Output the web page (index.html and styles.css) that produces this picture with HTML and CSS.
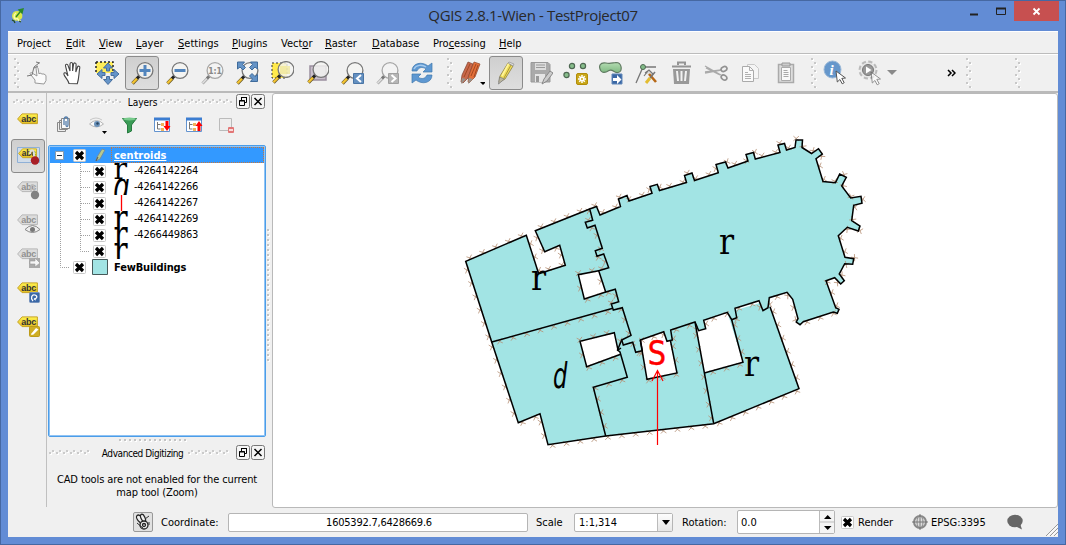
FILE: index.html
```html
<!DOCTYPE html>
<html lang="en">
<head>
<meta charset="utf-8">
<title>QGIS 2.8.1-Wien - TestProject07</title>
<link rel="stylesheet" href="styles.css">
</head>
<body>
<svg class="defs" width="0" height="0">
  <defs>
    <pattern id="gripV" width="7" height="8" patternUnits="userSpaceOnUse"><path d="M1 1h2v2h-2zM4 5h2v2h-2z" fill="#fff"/><path d="M0 0h2v2h-2zM3 4h2v2h-2z" fill="#c8c8c8"/></pattern>
    <pattern id="gripH" width="7" height="6" patternUnits="userSpaceOnUse"><path d="M1 3h2v2h-2zM4 1h2v2h-2z" fill="#fff"/><path d="M0 2h2v2h-2zM3 0h2v2h-2z" fill="#cbcbcb"/></pattern>
    <pattern id="gripLineV" width="3" height="5" patternUnits="userSpaceOnUse"><path d="M1 1h2v2h-2z" fill="#fff"/><path d="M0 0h2v2h-2z" fill="#c4c4c4"/></pattern>
    <pattern id="gripLineH" width="5" height="3" patternUnits="userSpaceOnUse"><path d="M1 1h2v2h-2z" fill="#fff"/><path d="M0 0h2v2h-2z" fill="#c4c4c4"/></pattern>
    <linearGradient id="yellowTag" x2="0" y2="1"><stop offset="0" stop-color="#fff34f"/><stop offset="1" stop-color="#e3bd22"/></linearGradient>
    <linearGradient id="greenFill" x2="0" y2="1"><stop offset="0" stop-color="#b4dcb2"/><stop offset="1" stop-color="#7fb982"/></linearGradient>
    <symbol id="lens" viewBox="0 0 24 24">
      <path d="M2.5 22.5l5-5.2" stroke="#6b5b2a" stroke-width="3.4"/><path d="M2.5 22.2l4.6-4.8" stroke="#f4c430" stroke-width="2.2"/>
      <path d="M7 17.5l2.5-2.6" stroke="#222" stroke-width="3"/>
      <circle cx="15" cy="9.5" r="7.9" fill="#f4f4f1" fill-opacity=".82" stroke="#777" stroke-width="1.3"/>
    </symbol>
    <symbol id="lensOff" viewBox="0 0 24 24">
      <path d="M2.5 22.5l5-5.2" stroke="#aaa" stroke-width="3"/><path d="M2.5 22.2l4.6-4.8" stroke="#e0e0e0" stroke-width="1.4"/>
      <path d="M7 17.5l2.5-2.6" stroke="#777" stroke-width="3"/>
      <circle cx="15" cy="9.5" r="7.9" fill="#f3f3f3" stroke="#a6a6a6" stroke-width="1.3"/>
    </symbol>
    <symbol id="tag" viewBox="0 0 22 12"><path d="M.6 6L5 .9H20.4V10.6H5z" fill="url(#yellowTag)" stroke="#c7a424"/><text x="4.2" y="8.7" class="abc">abc</text></symbol>
    <symbol id="tagOff" viewBox="0 0 22 12"><path d="M.6 6L5 .9H20.4V10.6H5z" fill="#ddd" stroke="#b7b7b7"/><text x="4.2" y="8.7" class="abc off">abc</text></symbol>
    <symbol id="cross" viewBox="0 0 13 13"><rect x=".5" y=".5" width="12" height="12" rx="1" fill="#fff" stroke="#c8c8c8"/><path d="M3 3l7 7M10 3l-7 7" stroke="#000" stroke-width="3.200"/></symbol>
    <symbol id="float" viewBox="0 0 14 15"><rect x=".5" y=".5" width="13" height="14" rx="2" fill="#f5f5f5" stroke="#777"/><path d="M5.500 6V3.500h5v5h-2M5 3.500h6M3.500 6.500h5v5h-5zM3 7h6" fill="none" stroke="#000"/></symbol>
    <symbol id="close" viewBox="0 0 14 15"><rect x=".5" y=".5" width="13" height="14" rx="2" fill="#f5f5f5" stroke="#777"/><path d="M3.500 4l7 7M10.500 4l-7 7" stroke="#000" stroke-width="1.500"/></symbol>
    <symbol id="cursor" viewBox="0 0 12 15"><path d="M1 1l9.500 7-3.700.4 2.400 4.300-2 1.100-2.300-4.300-2.600 2.500z" fill="#fff" stroke="#555"/></symbol>
  </defs>
</svg>

<div class="window">
  <header class="titlebar">
    <svg class="logo" width="14" height="16" viewBox="0 0 14 16"><path d="M6 3C1 3 0 8 2 11c2 3 7 2 9-1 1-3 0-7-5-7z" fill="#d9e84a"/><path d="M5 5c-3 2-2 6 0 6M5 11c3-2 1 3 5 2" fill="none" stroke="#f8fbb0" stroke-width="1.500"/><path d="M5 9l4-5M8 2l4-1-1 4z" stroke="#2b8a28" fill="#2b8a28" stroke-width="1.400"/><path d="M1 12l2 1 1 2M8 13l2 1" fill="none" stroke="#264d22" stroke-width="1.300"/></svg>
    <h1 class="title">QGIS 2.8.1-Wien - TestProject07</h1>
    <svg class="controls" width="89" height="20" viewBox="0 0 89 20"><path d="M0 13.500h8" stroke="#222" stroke-width="2"/><path d="M26.500 7.500h9v6h-9z" fill="none" stroke="#222"/><path d="M26 7.500h10" stroke="#222" stroke-width="2"/><path d="M44 0h45v20h-45z" fill="#c75050"/><path d="M63.500 7.500l6 6M69.500 7.500l-6 6" stroke="#fff" stroke-width="1.800"/></svg>
  </header>

  <main class="client">
    <nav class="menubar">
      <span class="m1">Pro<u>j</u>ect</span><span class="m2"><u>E</u>dit</span><span class="m3"><u>V</u>iew</span><span class="m4"><u>L</u>ayer</span><span class="m5"><u>S</u>ettings</span><span class="m6"><u>P</u>lugins</span><span class="m7">Vect<u>o</u>r</span><span class="m8"><u>R</u>aster</span><span class="m9"><u>D</u>atabase</span><span class="m10">Pro<u>c</u>essing</span><span><u>H</u>elp</span>
    </nav>

    <div class="toolbar">
      <svg class="grip first" width="12" height="30" viewBox="1 0 12 30"><rect x="7" width="6" height="30" fill="url(#gripV)"/></svg>
      <div class="tool"><svg width="24" height="24" viewBox="0 0 24 24"><path d="M9 22v-3L5 14c-2-2 0-3 1-2l5 3-1-8c0-1 1.500-1 2 0l1 6 1-1 2 1 2 0 2 1.500v5l-2 3.500z" fill="#fafafa" stroke="#999" transform="translate(1)"/><path d="M2 15l5-1 2-8 5-4M11 1l4 1M9 7l4-2" stroke="#777" fill="none"/></svg></div>
      <div class="tool"><svg width="24" height="24" viewBox="0 0 24 24"><path d="M9 22.500c-1-4-4-6-5-9-.5-2 1.500-2.200 2.500-.8L8 15 5.500 5c-.4-2 2-2.400 2.500-.6L10 10V3c.2-2 2.500-2 2.600 0v7l1-7c.4-1.700 2.600-1.300 2.500.4L15.800 11l1.700-5c.6-1.500 2.600-.9 2.300.7-1 5-.6 10-2.500 16z" fill="#fff" stroke="#444" stroke-width="1.100"/></svg></div>
      <div class="tool"><svg width="26" height="26" viewBox="0 0 26 26"><path d="M2 2h17v11h-17z" fill="#ffed59"/><path d="M2 2h17v10M2 2v12" fill="none" stroke="#222" stroke-width="1.500" stroke-dasharray="2 2"/><path d="M14 3l4.500 5h-3v3h-3v-3h-3zM14 24.500l4.500-5h-3v-3h-3v3h-3zM3 14l5-4.500v3h3v3H8v3zM25 14l-5-4.500v3h-3v3h3v3z" fill="#6594c8" stroke="#476f9e"/></svg></div>
      <div class="tool pressed"><svg width="24" height="24" viewBox="0 0 24 24"><use href="#lens"/><path d="M15 4v11M9.500 9.500h11" stroke="#5285bd" stroke-width="3"/></svg></div>
      <div class="tool"><svg width="24" height="24" viewBox="0 0 24 24"><use href="#lens"/><path d="M9.500 9.500h11" stroke="#5285bd" stroke-width="3"/></svg></div>
      <div class="tool"><svg width="24" height="24" viewBox="0 0 24 24"><use href="#lensOff"/><text x="8.200" y="13" class="one">1:1</text></svg></div>
      <div class="tool"><svg width="24" height="24" viewBox="0 0 24 24"><use href="#lens"/><path d="M2.500 1h7L7.500 3.500l3 3-2.500 2.500-3-3-2.500 2zM22.500 1h-7l2 2.500-3 3 2.500 2.500 3-3 2.500 2zM22.500 20.500h-7l2-2.500-3-3 2.500-2.500 3 3 2.500-2z" fill="#6493c6" stroke="#3f6b9b"/></svg></div>
      <div class="tool"><svg width="24" height="24" viewBox="0 0 24 24"><path d="M2 2h15v15H2z" fill="#ffe94c" stroke="#333" stroke-dasharray="2 2"/><use href="#lens" x="1" y="-1"/><path d="M10 5h10v8H10z" fill="#efe37e" opacity=".55"/></svg></div>
      <div class="tool"><svg width="24" height="24" viewBox="0 0 24 24"><path d="M5 5h16v14H5z" fill="#c9bfcb" stroke="#9a8f9f" stroke-width="1.500"/><use href="#lens" x="1" y="-1"/></svg></div>
      <div class="tool"><svg width="24" height="24" viewBox="0 0 24 24"><use href="#lens"/><path d="M13.500 12.500h10v10h-10z" fill="#6490c0" stroke="#4a75a5"/><path d="M21 14l-4 3.500 4 3.500" fill="none" stroke="#fff" stroke-width="2"/></svg></div>
      <div class="tool"><svg width="24" height="24" viewBox="0 0 24 24"><use href="#lensOff"/><path d="M13.500 12.500h10v10h-10z" fill="#b5b5b5" stroke="#a0a0a0"/><path d="M16.500 14l4 3.500-4 3.500" fill="none" stroke="#fff" stroke-width="2"/></svg></div>
      <div class="tool"><svg width="24" height="24" viewBox="0 0 24 24"><path d="M2 10c0-8 10-10 16-5l4-3v9h-9l3-3c-4-3-8-1-9 2zM22 14c0 8-10 10-16 5l-4 3v-9h9l-3 3c4 3 8 1 9-2z" fill="#5e98d2" stroke="#4178ae" stroke-width=".7"/><path d="M4 8c2-4 8-5 12-2" fill="none" stroke="#a7cbed" stroke-width="1.500"/></svg></div>
      <svg class="grip" width="14" height="30"><rect x="7" width="6" height="30" fill="url(#gripV)"/></svg>
      <div class="tool"><svg width="28" height="26" viewBox="0 0 28 26"><path d="M4 22l1-7L11 2l5 2-5 14-5 5z" fill="#c8684b" stroke="#7c402e" stroke-width=".7"/><path d="M11 22l1-7L17 2l6 2-5 13-6 6z" fill="#e46f39" stroke="#8e4529" stroke-width=".7"/><path d="M14 16l5-12M7 17l6-13M17 17l4-12" stroke="#a34822"/><path d="M5 18l4 1-5 5zM12 18l4 1-5 5z" fill="#9a938b"/><path d="M23 22h6l-3 3z" fill="#000"/></svg></div>
      <div class="tool pressed"><svg width="24" height="24" viewBox="0 0 24 24"><path d="M5 21l1-6L14 2l5 3-8 13z" fill="#f1df5a" stroke="#8b7f41" stroke-width=".8"/><path d="M8 15l7-13" stroke="#fff59d" stroke-width="1.600"/><path d="M10 17l7-13" stroke="#a9963c"/><path d="M4.500 23l1-7 5 2z" fill="#bbb69f" stroke="#777" stroke-width=".7"/><path d="M14 2l5 3 1-2-5-2z" fill="#ddd" stroke="#888" stroke-width=".6"/></svg></div>
      <div class="tool"><svg width="24" height="24" viewBox="0 0 24 24"><path d="M2 1.500h17l2 2V21H2z" fill="#aaa" stroke="#999"/><path d="M6 2h11v7H6z" fill="#ddd"/><path d="M7 4h9M7 6.500h9" stroke="#999"/><path d="M6 13h10v8H6z" fill="#e5e5e5"/><path d="M7 15h3v6H7z" fill="#999"/><path d="M13 23l2-5 6-8 3 2-6 8z" fill="#ccc" stroke="#888"/></svg></div>
      <div class="tool"><svg width="26" height="26" viewBox="0 0 26 26"><g fill="#87bd8b" stroke="#4e6852" stroke-width="1.200"><circle cx="9" cy="6" r="2.600"/><circle cx="20" cy="6" r="2.600"/><circle cx="3.500" cy="15" r="2.600"/></g><rect x="13.500" y="13.500" width="11" height="11" rx="1.500" fill="#c9a719" stroke="#b28d09"/><path d="M19 15v8M15 19h8M16.200 16.200l5.600 5.600M21.800 16.200l-5.600 5.600" stroke="#fff" stroke-width="1.500"/><circle cx="19" cy="19" r="1" fill="#c9a719"/></svg></div>
      <div class="tool"><svg width="26" height="26" viewBox="0 0 26 26"><path d="M3 11c-3-5-1-9 5-8 4 1 6 0 10-.5 6 0 7 9 2 10-4 1-5-4-9-2-3 2-6 3-8 .5z" fill="url(#greenFill)" stroke="#607a61" stroke-width="1.200"/><path d="M14 14h10v10H14z" fill="#3a67a4" stroke="#6389ba"/><path d="M15 18h4v-3l4.500 4.500L19 24v-3h-4z" fill="#fff"/></svg></div>
      <div class="tool"><svg width="24" height="24" viewBox="0 0 24 24"><path d="M2 22L9 6h13" fill="none" stroke="#777" stroke-width="1.300"/><circle cx="9" cy="6" r="2.500" fill="#81ba87" stroke="#4e6852"/><path d="M11 12l4-3 4 4-2 2M14 10l-4 5" fill="#ddd" stroke="#777" stroke-width="1.200"/><path d="M15 13l7 8" stroke="#b76816" stroke-width="2.600"/><path d="M12 22l4-5" stroke="#e3bd31" stroke-width="3"/><path d="M16 17l5-6" stroke="#777" stroke-width="1.500"/></svg></div>
      <div class="tool"><svg width="24" height="24" viewBox="0 0 24 24"><path d="M4 8h17l-1 15H5z" fill="#999"/><path d="M3 5.500h19M9 4V1.500h7V4" fill="none" stroke="#949494" stroke-width="2"/><path d="M8 10l1 10M12.500 10v10M17 10l-1 10" stroke="#f2f2f2" stroke-width="2"/></svg></div>
      <div class="tool"><svg width="24" height="24" viewBox="0 0 24 24"><path d="M1 5l16 9M1 12l16-3M2 7l14 7M1 11l16-2" stroke="#aaa" stroke-width="1.300"/><ellipse cx="20" cy="8" rx="3" ry="2.300" fill="none" stroke="#929292" stroke-width="1.700" transform="rotate(-25 20 8)"/><ellipse cx="20" cy="16.500" rx="3" ry="2.300" fill="none" stroke="#929292" stroke-width="1.700" transform="rotate(35 20 16.500)"/></svg></div>
      <div class="tool"><svg width="24" height="24" viewBox="0 0 24 24"><path d="M8.500 3.500h7l4 4v10h-11z" fill="#f5f5f5" stroke="#c9c9c9"/><path d="M3.500 5.500h7l4 4v11h-11z" fill="#fafafa" stroke="#aaa"/><path d="M10.500 5.500v4h4M6 11.500h3M6 13.500h6M6 15.500h6M6 17.500h6" fill="none" stroke="#b0b0b0"/></svg></div>
      <div class="tool"><svg width="24" height="24" viewBox="0 0 24 24"><path d="M4.500 3.500h15v18h-15z" fill="#ddd" stroke="#aaa" stroke-width="1.500"/><path d="M7.500 6.500h9v13h-9z" fill="#fafafa" stroke="#aaa"/><path d="M8 2h8v3H8z" fill="#ccc" stroke="#999"/><path d="M9.500 9.500h4M9.500 11.500h5M9.500 13.500h5M9.500 15.500h5" stroke="#aaa"/></svg></div>
      <svg class="grip" width="14" height="30"><rect x="7" width="6" height="30" fill="url(#gripV)"/></svg>
      <div class="tool"><svg width="25" height="26" viewBox="0 0 25 26"><circle cx="10.500" cy="9.500" r="8.500" fill="#6697cb" stroke="#9ab8d7"/><text x="7.500" y="14.500" class="info">i</text><use href="#cursor" x="13" y="10" width="12" height="15"/></svg></div>
      <div class="tool"><svg width="25" height="26" viewBox="0 0 25 26"><circle cx="11" cy="10" r="8" fill="#e6e6e6" stroke="#bababa" stroke-width="3" stroke-dasharray="4 2.280"/><circle cx="11" cy="10" r="7.600" fill="#e6e6e6"/><circle cx="11" cy="10" r="5.500" fill="#999" stroke="#777"/><path d="M9 6.500l5.500 3.500-5.500 3.500z" fill="#fff"/><use href="#cursor" x="13" y="11" width="12" height="15" opacity=".6"/></svg></div>
      <svg class="drop" width="10" height="6"><path d="M0 0h10L5 5z" fill="#8a8a8a"/></svg>
      <svg class="more" width="9" height="8"><path d="M1 1l3 3-3 3M5 1l3 3-3 3" fill="none" stroke="#000" stroke-width="1.500"/></svg>
      <svg class="grip g3" width="6" height="30"><rect width="6" height="30" fill="url(#gripV)"/></svg>
      <svg class="grip g4" width="6" height="30"><rect width="6" height="30" fill="url(#gripV)"/></svg>
    </div>

    <div class="workspace">
      <aside class="labelbar">
        <svg width="31" height="6"><rect width="31" height="6" fill="url(#gripH)"/></svg>
        <div class="ltool"><svg width="26" height="24" viewBox="0 0 26 24"><use href="#tag" x="2" y="6" width="22" height="12"/></svg></div>
        <div class="ltool pressed tall"><svg width="26" height="24" viewBox="0 0 26 24"><path d="M2.500 3.500h22v15h-22z" fill="#d1dce8" stroke="#8fb0d6"/><use href="#tag" x="3" y="4" width="20" height="11"/><path d="M15 10c0-5 4-5 4 0v3" fill="none" stroke="#ddd" stroke-width="2"/><circle cx="20" cy="16.500" r="4.200" fill="#a81f26"/></svg></div>
        <div class="ltool"><svg width="26" height="24" viewBox="0 0 26 24"><use href="#tagOff" x="2" y="3" width="22" height="12"/><path d="M16 13V9c0-3 3-3 3 0v4" fill="none" stroke="#bbb" stroke-width="1.500"/><circle cx="20" cy="17" r="4.200" fill="#818181"/></svg></div>
        <div class="ltool"><svg width="26" height="24" viewBox="0 0 26 24"><use href="#tagOff" x="2" y="2" width="22" height="12"/><path d="M10 17.500q7.500-8 15 0q-7.500 6-15 0z" fill="#eee" stroke="#888"/><circle cx="17.500" cy="17.500" r="2.500" fill="#777"/></svg></div>
        <div class="ltool"><svg width="26" height="24" viewBox="0 0 26 24"><use href="#tagOff" x="2" y="2" width="22" height="12"/><path d="M14 12h11v10H14z" fill="#aaa"/><path d="M15 15h5v-3l5 5-5 4v-3h-5z" fill="#f5f5f5" stroke="#999" stroke-width=".6"/></svg></div>
        <div class="ltool"><svg width="26" height="24" viewBox="0 0 26 24"><use href="#tag" x="2" y="2" width="22" height="12"/><rect x="14.500" y="12.500" width="10" height="10" rx="1" fill="#3b68a7" stroke="#7592bd"/><path d="M18 21c-3-3-1-7 2-6s2 4-1 4l2 1" fill="none" stroke="#fff" stroke-width="1.300"/></svg></div>
        <div class="ltool"><svg width="26" height="24" viewBox="0 0 26 24"><use href="#tag" x="2" y="2" width="22" height="12"/><rect x="14.500" y="12.500" width="10" height="10" rx="1" fill="#cfae24" stroke="#bd9b18"/><path d="M16 20l5-6 2.500 1.500-5 5-2 .5z" fill="#fff"/></svg></div>
      </aside>

      <section class="docks">
        <div class="docktitle"><svg width="72" height="6"><rect width="72" height="6" fill="url(#gripH)"/></svg><h2 class="dockname">Layers</h2><svg width="72" height="6"><rect width="72" height="6" fill="url(#gripH)"/></svg><div class="dockbtns"><svg width="14" height="15"><use href="#float"/></svg><svg width="14" height="15"><use href="#close"/></svg></div></div>
        <div class="layertools">
          <svg width="20" height="20" viewBox="0 0 20 20"><path d="M2.500 7.500h8v9h-8zM4.500 5.500h8v9h-8z" fill="#eee" stroke="#888"/><path d="M6.500 3.500h8v10h-8z" fill="#fafafa" stroke="#888"/><path d="M9 10V5c0-4 4-4 4 0v5c0 2-2 2-2 0V6" fill="none" stroke="#557eab" stroke-width="1.300"/></svg>
          <svg width="20" height="20" viewBox="0 0 20 20"><path d="M2.500 9q7-7 14 0q-7 6-14 0z" fill="#fafafa" stroke="#b7b7b7"/><circle cx="10" cy="9" r="3" fill="#6a91b9"/><circle cx="10.500" cy="8.500" r="1.200" fill="#29435c"/><path d="M3 5q6-4 12 0" fill="none" stroke="#c8c8c8"/><path d="M15 16h5l-2.500 3z" fill="#000"/></svg>
          <svg width="20" height="20" viewBox="0 0 20 20"><path d="M3.500 3.500h14l-5 6.500v6l-4 2v-8z" fill="#3a9b56" stroke="#277b40"/><ellipse cx="10.500" cy="4" rx="6.500" ry="1.500" fill="#77ca8b"/></svg>
          <svg width="20" height="20" viewBox="0 0 20 20"><path d="M2.500 3.500h15v13h-15z" fill="#fff" stroke="#6393cf"/><path d="M2 4h16" stroke="#3c7dd1" stroke-width="3"/><path d="M5.500 7v7h3M5.500 9.500h3" fill="none" stroke="#777"/><path d="M9 8h3v3H9zM9 13h3v3H9z" fill="#efb35c"/><path d="M13.500 6h3v5h2l-3.500 5-3.500-5h2z" fill="#f00"/></svg>
          <svg width="20" height="20" viewBox="0 0 20 20"><path d="M2.500 3.500h15v13h-15z" fill="#fff" stroke="#6393cf"/><path d="M2 4h16" stroke="#3c7dd1" stroke-width="3"/><path d="M5.500 7v7h3M5.500 9.500h3" fill="none" stroke="#777"/><path d="M9 8h3v3H9zM9 13h3v3H9z" fill="#efb35c"/><path d="M13.500 16h3v-5h2l-3.500-5-3.500 5h2z" fill="#f00"/></svg>
          <svg width="20" height="20" viewBox="0 0 20 20"><path d="M3.500 3.500h12v12h-12z" fill="#eee" stroke="#bbb"/><rect x="12" y="12" width="6" height="6" rx="1" fill="#e27676"/><path d="M13 15h4" stroke="#fff" stroke-width="1.500"/></svg>
        </div>
        <div class="tree">
          <svg class="branches" width="60" height="128" viewBox="0 0 60 128"><path d="M10.500 14V120.500H20M15 8.500H22M30.500 16V104.500H40M31 24.500h9M31 40.500h9M31 56.500h9M31 72.500h9M31 88.500h9" fill="none" stroke="#a0a0a0" stroke-dasharray="1 1"/></svg>
          <div class="row selected"><svg class="expander" width="9" height="9"><path d="M.5.5h8v8h-8z" fill="#fff" stroke="#8b9cab"/><path d="M2 4.500h5" stroke="#234"/></svg><svg class="check" width="13" height="13"><use href="#cross"/></svg><svg class="pen" width="16" height="16"><path d="M4 14l1-4 5-8 3 1-5 9z" fill="#b7c98c" stroke="#708ca2"/><path d="M4 14l2-4" stroke="#555"/></svg><span class="name focus"><u>centroids</u></span></div>
          <div class="row child"><svg class="check" width="13" height="13"><use href="#cross"/></svg><svg class="sym" width="16" height="16"><text transform="translate(.5 15.500) scale(1.050 1)" class="symr short">r</text></svg><span class="num">-4264142264</span></div>
          <div class="row child"><svg class="check" width="13" height="13"><use href="#cross"/></svg><svg class="sym" width="16" height="16"><text transform="translate(0 23) scale(.66 1)" class="symd">a</text></svg><span class="num">-4264142266</span></div>
          <div class="row child"><svg class="check" width="13" height="13"><use href="#cross"/></svg><svg class="sym" width="16" height="16"><path d="M8.500 0v16" stroke="#f00" stroke-width="1.300"/></svg><span class="num">-4264142267</span></div>
          <div class="row child"><svg class="check" width="13" height="13"><use href="#cross"/></svg><svg class="sym" width="16" height="16"><text transform="translate(.5 22) scale(.78 1)" class="symr">r</text></svg><span class="num">-4264142269</span></div>
          <div class="row child"><svg class="check" width="13" height="13"><use href="#cross"/></svg><svg class="sym" width="16" height="16"><text transform="translate(.5 22) scale(.78 1)" class="symr">r</text></svg><span class="num">-4266449863</span></div>
          <div class="row child"><svg class="check" width="13" height="13"><use href="#cross"/></svg><svg class="sym" width="16" height="16"><text transform="translate(.5 22) scale(.78 1)" class="symr">r</text></svg></div>
          <div class="row layer"><svg class="check" width="13" height="13"><use href="#cross"/></svg><svg class="swatch" width="16" height="16"><path d="M.5.5h15v15H.5z" fill="#a2e4e4" stroke="#465959"/></svg><span class="name few">FewBuildings</span></div>
        </div>
        <svg class="splitter" width="69" height="3"><rect width="69" height="3" fill="url(#gripLineH)"/></svg>
        <div class="docktitle second"><svg width="42" height="6"><rect width="42" height="6" fill="url(#gripH)"/></svg><h2 class="dockname tight">Advanced Digitizing</h2><svg width="41" height="6"><rect width="41" height="6" fill="url(#gripH)"/></svg><div class="dockbtns"><svg width="14" height="15"><use href="#float"/></svg><svg width="14" height="15"><use href="#close"/></svg></div></div>
        <p class="cad">CAD tools are not enabled for the current<br>map tool (Zoom)</p>
      </section>
      <svg class="vsplit" width="3" height="133"><rect width="3" height="133" fill="url(#gripLineV)"/></svg>

      <section class="map">
        <svg width="783" height="412" viewBox="273 94 783 412">
          <g class="fill">
            <path d="M465.700 261.300L526.300 235.300L538.700 273.700L565.300 265.300L559.700 245.300L544.700 251.700L535.300 230.700L589.700 209L640 240V335L613 309L491.700 342Z"/>
            <path d="M491.700 342L613 309L640 315L628 377.300L593.300 387.300L605.700 436L548 444.700L540 413.700L518.300 422.700Z"/>
            <path d="M605.700 436L593.300 387.300L627.300 377.300L620 340L695 322L713.700 423.700Z"/>
            <path d="M713.700 423.700L695 322L770 300V306.700L799 388.700Z"/>
            <path id="church" d="M589.700 209L596.500 206.500L600 215L620.500 206.500L618.500 199L627 195.500L629 201L652 193.300L650 186.500L657.300 184.300L659.500 190.500L686.500 182.500L684.500 175.500L692 173L694.500 180.500L718.300 172.700L716 164.500L725.500 162L728 168L748 161L746 154.500L753.500 152.500L755.300 159L780 152.500L778 145L784.500 143.500L786.500 150L795 147.500L796 140L802.500 140L802 147.500L811.500 153.500L818.500 148.700L822.300 154L816 158.700L823 181.500L835.500 182.700L839.700 174L846.300 177.300L841.700 186L850.700 198L861 196.300L862 203.300L853.700 205.300L851.700 220.700L860 226L858.300 231L847.300 227.300L838.300 235.700L845 257.300L853.700 258.700L852.700 264.300L844.700 263.700L839.300 274L844.300 280.700L840.700 284L834.700 277.700L826 280.700L835.700 307.700L839 309.300L837.300 313.300L833.300 312L803.300 321.700L800 324.700L796.300 322L798 318.700L792.700 299.300L787 292.300L769.300 297.700L768 307.700L763 310.700L759 300.700L735 308.300L736.700 317.700L731.700 319.700L727.300 312.300L703.700 320.300L705.700 328.700L698.700 330.700L695 322L670.700 330L672.300 340L667 341.300L663.700 331.700L640.300 340L642.300 350.700L635.700 352.300L632.700 342.300L623.300 345L621.700 340L631 335.300L622.300 307.700L613.300 310L611.300 304L618.700 301.700L615.300 289.300L605.700 292L598.700 270.700L608.700 267.700L603.700 254L597 256.300L595.300 250.700L602.300 248.300L595 225.300L587.300 228L585.300 222.300L592.700 220.300Z"/>
          </g>
          <g class="yard">
            <path d="M578.300 274.700L598.700 270.700L605.700 292L584.300 299Z"/>
            <path d="M580 341.300L614.300 332.700L620 354.500L586.700 366.700Z"/>
            <path d="M640.300 340L663.700 331.700L667 341.300L670.500 341L677 373L647 379.300Z"/>
            <path d="M695 322L698.700 330.700L705.700 328.700L703.700 320.300L727.300 312.300L743 362.300L704.300 373Z"/>
          </g>
          <path id="hatches" class="hatches"/>
          <g class="walls">
            <use href="#church"/>
            <path d="M589.700 209L535.300 230.700L544.700 251.700L559.700 245.300L565.300 265.300L538.700 273.700L526.300 235.300L465.700 261.300L491.700 342L612 308.500"/>
            <path d="M491.700 342L518.300 422.700L540 413.700L548 444.700L605.700 436L713.700 423.700L799 388.700L770 306.700"/>
            <path d="M605.700 436L593.300 387.300L627.300 377.300L620 352L617.500 350L621.700 340M695 322L713.700 423.700"/>
            <path d="M598.700 270.700L578.300 274.700L584.300 299L605.700 292M620 354.500L586.700 366.700L580 341.300L614.300 332.700L618 350L621 348M640.300 340L647 379.300L677 373L670.500 341M704.300 373L743 362.300L731.700 319.700"/>
          </g>
          <g class="glyphs">
            <text x="719" y="253.500" class="mapr">r</text>
            <text x="531" y="290" class="mapr">r</text>
            <text x="744" y="375.500" class="mapr">r</text>
            <text transform="translate(553 387.500) scale(.72 1)" class="mapd">d</text>
            <text transform="translate(647.700 365) scale(.94 1)" class="maps">S</text>
          </g>
          <path d="M657.500 445V371M652 381l5.500-10.500 5.500 10.500" fill="none" stroke="#f00" stroke-width="1.200"/>
        </svg>
      </section>
    </div>

    <footer class="status">
      <div class="track"><svg width="20" height="20" viewBox="0 0 20 20"><g fill="#eee" stroke="#222" stroke-width="1.300"><ellipse cx="7" cy="7" rx="2.500" ry="4.500" transform="rotate(-40 7 7)"/><ellipse cx="10" cy="6" rx="2" ry="4" transform="rotate(-25 10 6)"/><circle cx="11" cy="13" r="4"/><circle cx="11" cy="13" r="1.500"/></g><path d="M4 11l6 5M12 7l4-3M16 10v3" stroke="#333"/></svg></div>
      <span class="lcoord">Coordinate:</span>
      <div class="field coord">1605392.7,6428669.6</div>
      <span class="lscale">Scale</span>
      <div class="field combo"><span>1:1,314</span><svg class="comboarrow" width="15" height="17"><path d="M4 6h8l-4 5z"/></svg></div>
      <span class="lrot">Rotation:</span>
      <div class="field spin"><span>0.0</span><svg class="spinarrows" width="15" height="22"><path d="M0 11h15" stroke="#bbb"/><path d="M4 8h7.500L7.700 4zM4 15h7.500L7.700 19z"/></svg></div>
      <svg class="check" width="13" height="13"><use href="#cross"/></svg>
      <span class="lrender">Render</span>
      <svg class="globe" width="16" height="16" viewBox="0 0 16 16"><circle cx="8" cy="8" r="6" fill="#ddd" stroke="#888" stroke-width="2"/><ellipse cx="8" cy="8" rx="3" ry="6" fill="none" stroke="#888"/><path d="M0 8h16M8 0v16" stroke="#777"/></svg>
      <span class="lcrs">EPSG:3395</span>
      <svg width="16" height="16" viewBox="0 0 16 16"><ellipse cx="8" cy="7" rx="7.700" ry="6.300" fill="#666"/><path d="M8 12l7 3.500-2-6z" fill="#666"/></svg>
      <svg class="sizegrip" width="12" height="12"><path d="M0 12L12 0M4 12l8-8M8 12l4-4" stroke="#999"/><path d="M1.500 12L12 1.500M5.500 12L12 5.500M9.500 12L12 9.500" stroke="#fff"/></svg>
    </footer>
  </main>
</div>
<script src="hatch.js"></script>
</body>
</html>
```

FILE: styles.css
```css
* { box-sizing: border-box; }
body { margin: 0; overflow: hidden; font: 11px/14px "DejaVu Sans Condensed", "DejaVu Sans", sans-serif; font-stretch: condensed; color: #000; }
svg { display: block; flex: none; }
.defs { position: absolute; }
.window { width: 1066px; height: 545px; padding: 0 7px 7px; background: #628cd5; border: 1px solid #4668a2; display: flex; flex-direction: column; }
.titlebar { height: 30px; flex: none; display: flex; align-items: flex-start; margin-right: -1px; }
.logo { margin: 7px 0 0 3px; }
.title { flex: none; width: 240px; margin: 4px 0 0 388px; text-align: center; font: 15px/20px "Open Sans", sans-serif; letter-spacing: -.36px; color: #292929; white-space: nowrap; }
.controls { margin-left: auto; }
.client { height: 506px; width: 1050px; background: #f0f0f0; display: flex; flex-direction: column; border-top: 1px solid #fff; }

.menubar { height: 22px; flex: none; display: flex; align-items: center; padding: 3px 0 0 9px; border-bottom: 1px solid #bcbcbc; white-space: nowrap; }
.menubar u, .row u { text-underline-offset: 1px; }
.m1 { width: 49px; } .m2 { width: 33px; } .m3 { width: 37px; } .m4 { width: 42px; } .m5 { width: 54px; }
.m6 { width: 49px; } .m7 { width: 44px; } .m8 { width: 47px; } .m9 { width: 61px; } .m10 { width: 66px; }

.toolbar { height: 39px; flex: none; display: flex; align-items: center; border-top: 1px solid #fff; border-bottom: 2px solid #bababa; }
.tool { width: 35px; height: 34px; flex: none; display: flex; align-items: center; justify-content: center; padding-right: 2px; }
.pressed { border: 1px solid #8b8b8b; border-radius: 3px; background: linear-gradient(#cfcfcf, #dedede); }
.toolbar .pressed { width: 34px; margin-right: 1px; padding-right: 0; }
.drop { margin-left: -1px; }
.more { margin-left: 50px; }
.g3 { margin-left: 10px; }
.g4 { margin-left: 43px; }
.one { font: bold 8.5px "DejaVu Sans Condensed", sans-serif; fill: #888; }
.info { font: italic bold 15px "Liberation Serif", serif; fill: #fff; }
.abc { font: bold 9px "Liberation Sans", sans-serif; fill: #333; letter-spacing: -.2px; }
.abc.off { fill: #909090; }

.workspace { height: 415px; flex: none; display: flex; }
.labelbar { width: 39px; flex: none; padding: 6px 0 0 3px; border-right: 1px solid #c0c0c0; height: 414px; }
.labelbar > svg { margin-left: 2px; }
.ltool { width: 34px; height: 34.100px; display: flex; align-items: center; justify-content: center; }
.labelbar > svg + .ltool { height: 34px; padding-bottom: 7px; }
.ltool.tall { height: 34px; }

.docks { width: 218px; margin-left: 1px; flex: none; }
.docktitle { height: 17px; display: flex; align-items: center; justify-content: space-between; padding-left: 1px; }
.docktitle.second { margin-top: 2px; }
.dockname { margin: 0 -2px 0 2px; padding-top: 2px; font: 10px/14px "DejaVu Sans Condensed", sans-serif; font-stretch: condensed; white-space: nowrap; }
.dockname.tight { letter-spacing: -.42px; margin: 0 -3px 0 3px; }
.dockbtns { display: flex; gap: 1px; margin-right: 1px; margin-left: -1px; }
.layertools { height: 35px; padding: 0 0 5px 7px; display: flex; gap: 12.200px; align-items: center; }
.tree { position: relative; width: 218px; height: 292px; background: #fff; border: 1px solid #4b9de8; box-shadow: inset 0 0 0 1px #91c4f5; border-radius: 2px; padding: 1px; }
.branches { position: absolute; left: 1px; top: 1px; z-index: 0; }
.row { position: relative; height: 16px; display: flex; align-items: center; }
.row.selected { background: #3399ff; color: #fff; padding-left: 5px; }
.row.selected .check { margin-left: 9px; }
.pen { margin-left: 6px; }
.name { font-weight: bold; }
.few { padding-top: 1px; letter-spacing: -.15px; }
.focus { flex: 1; height: 16px; border: 1px dotted #c8763c; margin-left: 3px; padding-left: 2px; line-height: 15px; }
.child { padding-left: 43px; }
.sym { margin: 0 5px 0 7px; }
.num { letter-spacing: -.22px; }
.layer { padding-left: 23px; }
.swatch { margin: 0 6px; }
.symr { font: 42px "DejaVu Serif Condensed", "DejaVu Serif", serif; }
.symr.short { font-size: 30px; }
.symd { font: italic 44px "Open Sans", sans-serif; }
.splitter { margin: 2px 0 0 71px; }
.cad { margin: 12px 0 0; text-align: center; line-height: 13px; white-space: nowrap; letter-spacing: -.11px; }
.vsplit { margin: 136px 0 0 1px; }
.map { width: 786px; height: 415px; margin-left: 1.500px; background: #fff; border: 1px solid #b9b9b9; border-radius: 3px; flex: none; }
.fill { fill: #a2e4e4; }
.yard { fill: #fff; }
.walls { fill: none; stroke: #000; stroke-width: 1.500; }
.hatches { fill: none; stroke: #b58f75; stroke-width: .8; }
.mapr { font: 35px "DejaVu Serif Condensed", "DejaVu Serif", serif; }
.mapd { font: italic 35px "DejaVu Sans Condensed", sans-serif; }
.maps { font: 34px "DejaVu Sans Condensed", sans-serif; fill: #f00; stroke: #f00; stroke-width: .4; }

.status { height: 28px; flex: none; display: flex; align-items: center; padding-left: 125px; position: relative; white-space: nowrap; }
.status span { padding-top: 1px; }
.track { width: 20px; height: 20px; border: 1px solid #999; border-radius: 2px; background: #e1e1e1; display: flex; align-items: center; justify-content: center; }
.lcoord { width: 67px; margin-left: 8px; }
.field { background: #fff; border: 1px solid #b5b5b5; border-radius: 2px; height: 19px; display: flex; align-items: center; }
.coord { width: 300px; justify-content: center; letter-spacing: -.23px; padding: 2px 0 0 2px; }
.lscale { width: 38px; margin-left: 8px; }
.combo { width: 99px; padding-left: 4px; justify-content: space-between; }
.comboarrow { background: linear-gradient(#fdfdfd, #e6e6e6); border-left: 1px solid #bbb; }
.lrot { width: 55px; margin-left: 9px; }
.spin { width: 98px; height: 24px; padding-left: 3px; justify-content: space-between; }
.spinarrows { background: #f4f4f4; border-left: 1px solid #bbb; }
.status .check { margin-left: 6px; }
.lrender { margin-left: 4px; width: 54px; }
.lcrs { margin-left: 3px; width: 76px; }
.sizegrip { margin-left: auto; align-self: flex-end; }
```

FILE: hatch.js
```js
// Small cross marks along the building outlines, pushed slightly outward.
(function () {
  var svgNs = "http://www.w3.org/2000/svg";
  var lines = [
    document.getElementById("church").getAttribute("d"),
    "M491.7 342L465.7 261.3L526.3 235.3L538.7 273.7L565.3 265.3L559.7 245.3L544.7 251.7L535.3 230.7L589.7 209",
    "M613 309L491.7 342",
    "M770 306.7L799 388.7L713.7 423.7L605.7 436L548 444.7L540 413.7L518.3 422.7L491.7 342",
    "M627.3 377.3L593.3 387.3L605.7 436",
    "M713.7 423.7L695 322",
    "M605.7 292L584.3 299L578.3 274.7L598.7 270.7",
    "M620 354.5L586.7 366.7L580 341.3L614.3 332.7",
    "M670.5 341L677 373L647 379.3L640.3 340",
    "M731.7 319.7L743 362.3L704.3 373"
  ];
  var out = "";
  lines.forEach(function (d) {
    var p = document.createElementNS(svgNs, "path");
    p.setAttribute("d", d);
    var len = p.getTotalLength();
    for (var s = 6; s < len; s += 14) {
      var a = p.getPointAtLength(s), b = p.getPointAtLength(Math.min(s + 0.5, len));
      var t = Math.atan2(b.y - a.y, b.x - a.x);
      var x = a.x + Math.sin(t) * 1.5, y = a.y - Math.cos(t) * 1.5;
      [Math.PI / 4.5, -Math.PI / 4.5].forEach(function (k) {
        var dx = Math.cos(t + k) * 3.6, dy = Math.sin(t + k) * 3.6;
        out += "M" + (x - dx) + " " + (y - dy) + "L" + (x + dx) + " " + (y + dy);
      });
    }
  });
  document.getElementById("hatches").setAttribute("d", out);
})();
```
